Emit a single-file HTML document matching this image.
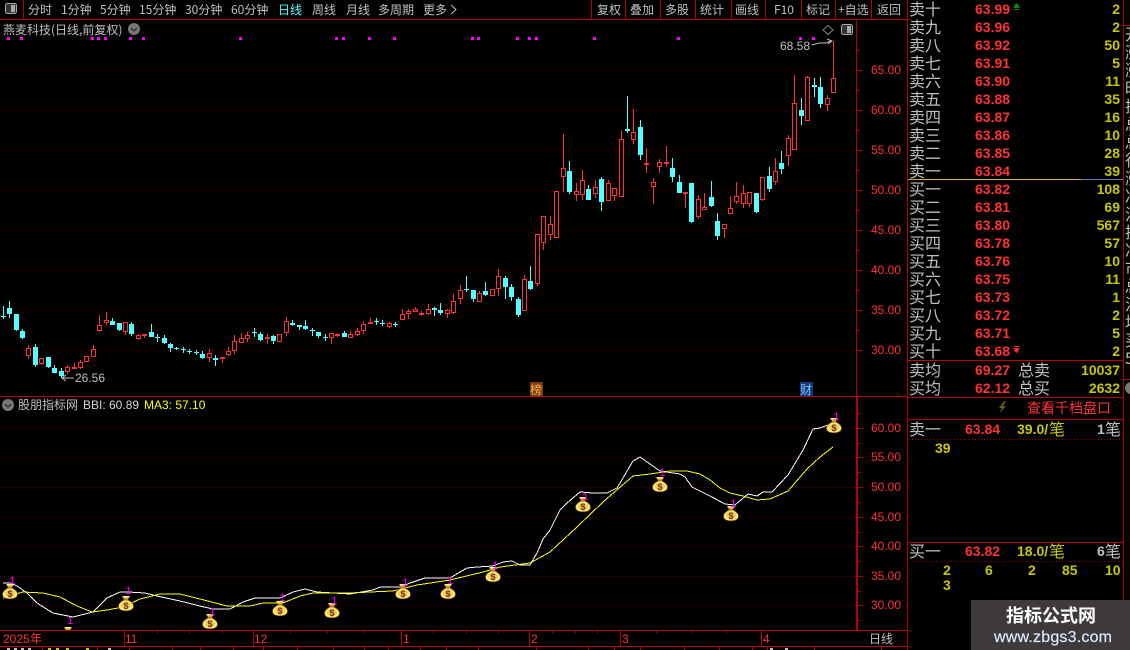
<!DOCTYPE html>
<html><head><meta charset="utf-8"><style>
html,body{margin:0;padding:0;background:#000;width:1130px;height:650px;overflow:hidden}
svg{display:block}
text{font-family:"WenQuanYi Zen Hei","Noto Sans CJK SC","Liberation Sans",sans-serif;font-size:12px;fill:#c0c0c0}
.t{font-size:12px}
.l{font-size:16px}
.n{font-family:"Liberation Sans",sans-serif;font-size:12px}
.b{font-family:"Liberation Sans",sans-serif;font-size:14px;font-weight:bold;fill:#ff3232}
.y{font-family:"Liberation Sans",sans-serif;font-size:14px;font-weight:bold;fill:#c8c800}
.w{font-family:"Liberation Sans",sans-serif;font-size:14px;font-weight:bold;fill:#c0c0c0}
.r{fill:#ff3232}
.m{fill:#f0f;font-family:"Liberation Mono",monospace;font-size:11px}
.d{font-family:"Liberation Sans",sans-serif;font-size:9px;font-weight:bold;fill:#7a2a20}
</style></head><body>
<svg width="1130" height="650" viewBox="0 0 1130 650" xmlns="http://www.w3.org/2000/svg">
<defs>
<radialGradient id="g" cx=".5" cy=".5" r=".5"><stop offset="0" stop-color="#e8b858"/><stop offset=".55" stop-color="#f0cc58"/><stop offset=".8" stop-color="#fff070"/><stop offset="1" stop-color="#fff8a0"/></radialGradient>
<g id="bag"><path d="M-3-7h6l-1.200 3.500h-3.600z" fill="#e09a20"/><path d="M-3.500-8h7v1.500h-7z" fill="#fff2a0"/><path d="M-2-4C-5-2.500-7.500-.5-7.500 2c0 3.200 3 4.800 7.500 4.800S7.500 5.200 7.500 2C7.500-.5 5-2.500 2-4z" fill="url(#g)" stroke="#7a4a10" stroke-width=".7"/></g>
</defs>
<g shape-rendering="crispEdges" fill="none">
<!-- grid -->
<path d="M0 70.500H856M0 110.500H856M0 150.500H856M0 190.500H856M0 230.500H856M0 270.500H856M0 310.500H856M0 350.500H856M0 428.500H856M0 457.500H856M0 487.500H856M0 517.500H856M0 546.500H856M0 576.500H856M0 605.500H856" stroke="#700000" stroke-dasharray="1 3"/>
<!-- frame -->
<path d="M0 19.500H907M0 396.500H907M0 630.500H907M0 646.500H907M23.500 0V19M591.500 0V19M625.500 0V19M660.500 0V19M695.500 0V19M731.500 0V19M765.500 0V19M801.500 0V19M835.500 0V19M871.500 0V19M907.500 0V650M1123.500 0V600M907 360.500H1123M907 397.500H1123M907 419.500H1123M907 542.500H1123M1124 25.500H1130M1124 379.500H1130M856.500 19V397" stroke="#b80000"/>
<path d="M857 397V630" stroke="#b80000" stroke-width="2"/>
<!-- axis ticks -->
<path d="M857 70.500h5M857 110.500h5M857 150.500h5M857 190.500h5M857 230.500h5M857 270.500h5M857 310.500h5M857 350.500h5M857 90.500h3M857 130.500h3M857 170.500h3M857 210.500h3M857 250.500h3M857 290.500h3M857 330.500h3M857 50.500h3M858 428.500h5M858 457.500h5M858 487.500h5M858 517.500h5M858 546.500h5M858 576.500h5M858 605.500h5M858 443.500h3M858 472.500h3M858 502.500h3M858 532.500h3M858 561.500h3M858 591.500h3M858 620.500h3M858 413.500h3" stroke="#b80000"/>
<path d="M124.500 630V646M253.500 630V646M401.500 630V646M529.500 630V646M620.500 630V646M761.500 630V646M157.500 630v3M189.500 630v3M222.500 630v3M290.500 630v3M327.500 630v3M364.500 630v3M433.500 630v3M466.500 630v3M498.500 630v3M552.500 630v3M575.500 630v3M597.500 630v3M656.500 630v3M692.500 630v3M726.500 630v3M42.500 646v4M97.500 646v4M129.500 646v4M172.500 646v4M200.500 646v4M233.500 646v4M263.500 646v4M297.500 646v4M333.500 646v4M364.500 646v4M388.500 646v4M420.500 646v4M446.500 646v4M478.500 646v4M536.500 646v4M588.500 646v4M614.500 646v4M640.500 646v4M684.500 646v4M719.500 646v4M752.500 646v4M767.500 646v4M814.500 646v4M881.500 646v4" stroke="#b80000"/>
<path d="M7 648h3v2h-3zM14 648h3v2h-3zM21 648h3v2h-3zM28 648h3v2h-3zM108 648h3v2h-3zM770 648h3v2h-3zM785 648h3v2h-3z" fill="#c0c0c0"/>
<path d="M48 648h3v2h-3zM56 648h3v2h-3zM66 648h3v2h-3zM86 648h3v2h-3z" fill="#c8c800"/>
<!-- book lines -->
<path d="M908 179.500H1081" stroke="#d8a040"/><path d="M1081 179.500H1123" stroke="#4a80c0"/>
<path d="M909 439.500H1123M909 561.500H1123" stroke="#a00000" stroke-dasharray="1 2"/>
<!-- magenta ticks -->
<path d="M7 37h3v3H7zM20 37h3v3h-3zM91 37h3v3h-3zM97 37h3v3h-3zM104 37h3v3h-3zM129 37h3v3h-3zM142 37h3v3h-3zM239 37h3v3h-3zM335 37h3v3h-3zM342 37h3v3h-3zM368 37h3v3h-3zM393 37h3v3h-3zM471 37h3v3h-3zM477 37h3v3h-3zM516 37h3v3h-3zM528 37h3v3h-3zM535 37h3v3h-3zM593 37h3v3h-3zM677 37h3v3h-3zM799 37h3v3h-3zM812 37h3v3h-3z" fill="#f0f"/>
<!-- cyan wicks -->
<path stroke="#54ffff" d="M3.500 306V319M9.500 301V318M16.500 314V331M22.500 329V339M35.500 344V367M48.500 357V368M54.500 365V373M61.500 368V378M112.500 318V325M119.500 323V331M131.500 322V336M151.500 324V337M157.500 334V342M164.500 335V344M170.500 343V352M176.500 347V350M183.500 347V353M189.500 349V354M196.500 350V355M202.500 351V359M215.500 355V366M254.500 328V337M260.500 332V341M273.500 335V344M292.500 320V326M299.500 325V330M305.500 320V330M312.500 328V336M318.500 332V338M325.500 334V341M344.500 331V337M376.500 318V325M382.500 320V326M395.500 322V327M434.500 307V316M440.500 303V315M466.500 276V292M473.500 290V302M485.500 282V296M505.500 276V299M511.500 284V301M518.500 297V317M530.500 266V290M569.500 161V194M588.500 185V200M601.500 177V211M627.500 96V133M640.500 120V160M672.500 158V182M679.500 175V193M691.500 183V223M711.500 181V207M717.500 213V240M756.500 193V213M769.500 167V192M781.500 151V174M801.500 98V125M814.500 78V97M820.500 77V108"/>
<!-- cyan bodies -->
<path fill="#54ffff" d="M1 316h5v1H1zM7 308h5v6H7zM14 314h5v16h-5zM20 331h5v7h-5zM33 347h5v18h-5zM46 357h5v10h-5zM52 368h5v5h-5zM59 371h5v5h-5zM110 321h5v4h-5zM117 323h5v7h-5zM129 324h5v10h-5zM149 332h5v5h-5zM155 337h5v1h-5zM162 338h5v5h-5zM168 344h5v4h-5zM174 348h5v1h-5zM181 349h5v1h-5zM187 351h5v1h-5zM194 352h5v1h-5zM200 354h5v4h-5zM213 358h5v2h-5zM252 332h5v1h-5zM258 334h5v6h-5zM271 336h5v5h-5zM290 323h5v2h-5zM297 325h5v2h-5zM303 326h5v3h-5zM310 330h5v1h-5zM316 332h5v4h-5zM323 337h5v1h-5zM342 333h5v4h-5zM374 321h5v1h-5zM380 323h5v1h-5zM393 324h5v1h-5zM432 308h5v2h-5zM438 310h5v3h-5zM464 289h5v1h-5zM471 290h5v9h-5zM483 291h5v4h-5zM503 278h5v9h-5zM509 287h5v10h-5zM516 299h5v16h-5zM528 281h5v8h-5zM567 171h5v21h-5zM586 189h5v11h-5zM599 179h5v23h-5zM625 129h5v2h-5zM638 127h5v28h-5zM670 168h5v9h-5zM677 182h5v11h-5zM689 183h5v39h-5zM709 197h5v9h-5zM715 221h5v15h-5zM754 193h5v19h-5zM767 176h5v13h-5zM779 163h5v6h-5zM799 110h5v6h-5zM812 85h5v2h-5zM818 87h5v17h-5z"/>
<!-- red wicks -->
<path stroke="#ff3232" d="M28.500 345V348M28.500 356V359M41.500 364V365M67.500 365V367M67.500 372V374M74.500 363V369M80.500 360V362M80.500 368V369M93.500 345V349M99.500 315V325M99.500 331V332M106.500 312V320M106.500 323V325M125.500 332V335M138.500 334V335M138.500 339V340M144.500 334V338M209.500 349V353M209.500 358V362M222.500 357V363M228.500 347V351M228.500 355V356M234.500 335V341M234.500 351V354M241.500 333V338M247.500 332V335M247.500 339V342M267.500 334V337M267.500 339V344M286.500 317V321M286.500 333V336M331.500 338V344M337.500 333V337M350.500 331V334M357.500 328V331M357.500 335V336M363.500 321V324M363.500 331V334M370.500 318V324M389.500 322V323M389.500 327V328M402.500 309V314M408.500 309V311M408.500 314V319M415.500 307V309M421.500 311V316M428.500 304V309M428.500 314V315M447.500 309V310M447.500 314V318M453.500 294V301M453.500 313V314M460.500 285V290M460.500 299V304M479.500 291V293M498.500 269V276M498.500 289V296M524.500 275V279M537.500 284V286M543.500 243V250M550.500 216V224M550.500 235V240M563.500 134V168M563.500 177V192M576.500 183V191M576.500 195V201M582.500 170V180M582.500 195V200M595.500 180V187M595.500 194V198M608.500 180V183M614.500 196V201M621.500 130V139M633.500 109V132M633.500 140V144M646.500 148V173M653.500 178V182M653.500 187V204M659.500 159V162M659.500 167V173M666.500 146V167M685.500 192V208M698.500 195V199M698.500 217V219M704.500 193V207M724.500 229V238M730.500 196V208M736.500 182V196M736.500 202V204M743.500 185V193M743.500 204V208M749.500 204V207M762.500 200V201M775.500 158V171M775.500 182V185M788.500 135V138M788.500 156V166M794.500 75V103M807.500 76V77M827.500 95V98M827.500 105V111M833.500 41V78"/>
<!-- red bodies -->
<path stroke="#ff3232" d="M26.500 348.500h4v7h-4zM39.500 358.500h4v5h-4zM65.500 367.500h4v4h-4zM72.500 367.500h4v1h-4zM78.500 362.500h4v5h-4zM84.500 356.500h4v5h-4zM91.500 349.500h4v7h-4zM97.500 325.500h4v5h-4zM104.500 320.500h4v2h-4zM123.500 322.500h4v9h-4zM136.500 335.500h4v3h-4zM142.500 334.500h4v1h-4zM207.500 353.500h4v4h-4zM220.500 357.500h4v1h-4zM226.500 351.500h4v3h-4zM232.500 341.500h4v9h-4zM239.500 338.500h4v4h-4zM245.500 335.500h4v3h-4zM265.500 337.500h4v1h-4zM277.500 334.500h4v7h-4zM284.500 321.500h4v11h-4zM329.500 333.500h4v4h-4zM335.500 334.500h4v1h-4zM348.500 334.500h4v3h-4zM355.500 331.500h4v3h-4zM361.500 324.500h4v6h-4zM368.500 322.500h4v1h-4zM387.500 323.500h4v3h-4zM400.500 314.500h4v5h-4zM406.500 311.500h4v2h-4zM413.500 309.500h4v2h-4zM419.500 313.500h4v1h-4zM426.500 309.500h4v4h-4zM445.500 310.500h4v3h-4zM451.500 301.500h4v11h-4zM458.500 290.500h4v8h-4zM477.500 293.500h4v8h-4zM490.500 289.500h4v6h-4zM496.500 276.500h4v12h-4zM522.500 279.500h4v31h-4zM535.500 234.500h4v49h-4zM541.500 216.500h4v26h-4zM548.500 224.500h4v10h-4zM554.500 191.500h4v46h-4zM561.500 168.500h4v8h-4zM574.500 191.500h4v3h-4zM580.500 180.500h4v14h-4zM593.500 187.500h4v6h-4zM606.500 183.500h4v17h-4zM612.500 188.500h4v7h-4zM619.500 139.500h4v57h-4zM631.500 132.500h4v7h-4zM644.500 163.500h4v1h-4zM651.500 182.500h4v4h-4zM657.500 162.500h4v4h-4zM664.500 162.500h4v1h-4zM683.500 192.500h4v1h-4zM696.500 199.500h4v17h-4zM702.500 207.500h4v2h-4zM722.500 224.500h4v4h-4zM728.500 208.500h4v5h-4zM734.500 196.500h4v5h-4zM741.500 193.500h4v10h-4zM747.500 192.500h4v11h-4zM760.500 177.500h4v22h-4zM773.500 171.500h4v10h-4zM786.500 138.500h4v17h-4zM792.500 103.500h4v46h-4zM805.500 77.500h4v43h-4zM825.500 98.500h4v6h-4zM831.500 78.500h4v14h-4z"/>
<!-- labels bg -->
<rect x="530" y="382" width="13" height="14" fill="#7a3c10"/>
<rect x="800" y="382" width="13" height="14" fill="#103c7a"/>
</g>
<!-- indicator lines -->
<polyline fill="none" shape-rendering="crispEdges" stroke="#fff" stroke-width="1" points="3,583 11,583 17,586 27,593 37,603 53,613 73,617 93,612 107,598 120,592 128,592 145,593 157,596 180,601 200,606 213,609 230,609 243,602 255,598 280,598 293,592 305,589 317,592 350,594 373,590 380,587 400,587 410,583 425,578 450,578 467,568 477,567 493,566 503,562 512,561 520,565 530,565 537,553 543,539 550,530 560,510 567,503 580,492 593,493 607,493 617,488 623,478 633,461 640,457 650,464 660,471 680,474 685,477 692,487 710,496 725,504 735,505 748,494 757,496 763,492 772,492 788,475 797,460 803,450 813,429 820,428 833,423"/>
<polyline fill="none" shape-rendering="crispEdges" stroke="#ffff00" stroke-width="1" points="3,598 23,592 43,593 60,597 77,606 92,612 107,610 123,607 140,599 160,594 180,594 200,599 227,606 250,606 263,603 283,603 300,596 313,593 350,593 370,592 393,591 417,585 450,580 483,572 500,567 530,563 550,552 577,527 603,502 633,476 650,474 670,471 687,471 700,474 710,480 720,488 730,493 743,496 757,500 770,499 788,491 807,469 820,457 833,447"/>
<!-- bags -->
<svg x="0" y="397" width="856" height="233">
<use href="#bag" x="10" y="195"/><use href="#bag" x="68" y="238"/><use href="#bag" x="126" y="207"/><use href="#bag" x="210" y="225"/><use href="#bag" x="280" y="212"/><use href="#bag" x="332" y="214"/><use href="#bag" x="403" y="195"/><use href="#bag" x="448" y="195"/><use href="#bag" x="493" y="178"/><use href="#bag" x="583" y="108"/><use href="#bag" x="660" y="88"/><use href="#bag" x="731" y="117"/><use href="#bag" x="834" y="29"/>
<g text-anchor="middle"><text class="d" x="10" y="200">$</text><text class="d" x="126" y="212">$</text><text class="d" x="210" y="230">$</text><text class="d" x="280" y="217">$</text><text class="d" x="332" y="219">$</text><text class="d" x="403" y="200">$</text><text class="d" x="448" y="200">$</text><text class="d" x="493" y="183">$</text><text class="d" x="583" y="113">$</text><text class="d" x="660" y="93">$</text><text class="d" x="731" y="122">$</text><text class="d" x="834" y="34">$</text></g>
<text class="m" x="9" y="187">1</text><text class="m" x="67" y="227">1</text><text class="m" x="125" y="197">1</text><text class="m" x="209" y="218">1</text><text class="m" x="279" y="204">1</text><text class="m" x="331" y="207">1</text><text class="m" x="402" y="189">1</text><text class="m" x="447" y="187">1</text><text class="m" x="492" y="172">1</text><text class="m" x="582" y="103">1</text><text class="m" x="659" y="79">1</text><text class="m" x="730" y="110">1</text><text class="m" x="833" y="23">1</text>
</svg>
<!-- toolbar -->
<rect x="5.500" y="3.500" width="11" height="10" rx="2" fill="#333" stroke="#aaa"/><rect x="11" y="5" width="4" height="7" fill="#aaa"/>
<g class="t">
<text x="28" y="14">分时</text><text x="61" y="14">1分钟</text><text x="100" y="14">5分钟</text><text x="139" y="14">15分钟</text><text x="185" y="14">30分钟</text><text x="231" y="14">60分钟</text><text x="278" y="14" style="fill:#54ffff">日线</text><text x="312" y="14">周线</text><text x="346" y="14">月线</text><text x="378" y="14">多周期</text><text x="423" y="14">更多</text>
<text x="597" y="14">复权</text><text x="630" y="14">叠加</text><text x="665" y="14">多股</text><text x="700" y="14">统计</text><text x="735" y="14">画线</text><text x="774" y="14">F10</text><text x="806" y="14">标记</text><text x="838" y="14">+自选</text><text x="877" y="14">返回</text>
</g>
<path d="M451 5l5 4.500-5 4.500" fill="none" stroke="#c0c0c0"/>
<!-- main title -->
<text x="3" y="34">燕麦科技(日线,前复权)</text>
<circle cx="134" cy="29" r="6" fill="#777"/><path d="M131 28l3 3 3-3" fill="none" stroke="#222"/>
<path d="M828 25.500l5 4.500-5 4.500-5-4.500z" fill="none" stroke="#888"/>
<rect x="841.500" y="24.500" width="11" height="10" rx="2" fill="#333" stroke="#aaa"/><rect x="847" y="26" width="4" height="7" fill="#aaa"/>
<text class="n" x="780" y="50">68.58</text>
<path d="M812 45l7-2h7l5-2M827 39l5 2-4 3" fill="none" stroke="#c0c0c0"/>
<text class="n" x="75" y="382">26.56</text>
<path d="M62 378h12M66 375l-4 3 4 3" fill="none" stroke="#c0c0c0"/>
<text x="530" y="394" style="fill:#ffb040">榜</text><text x="800" y="394" style="fill:#80c0ff">财</text>
<!-- price axis -->
<g>
<text class="n r" x="871" y="74">65.00</text><text class="n r" x="871" y="114">60.00</text><text class="n r" x="871" y="154">55.00</text><text class="n r" x="871" y="194">50.00</text><text class="n r" x="871" y="234">45.00</text><text class="n r" x="871" y="274">40.00</text><text class="n r" x="871" y="314">35.00</text><text class="n r" x="871" y="354">30.00</text>
<text class="n r" x="871" y="432">60.00</text><text class="n r" x="871" y="461">55.00</text><text class="n r" x="871" y="491">50.00</text><text class="n r" x="871" y="521">45.00</text><text class="n r" x="871" y="550">40.00</text><text class="n r" x="871" y="580">35.00</text><text class="n r" x="871" y="609">30.00</text>
</g>
<!-- lower title -->
<circle cx="8" cy="405" r="6" fill="#777"/><path d="M5 404l3 3 3-3" fill="none" stroke="#222"/>
<text x="18" y="409">股朋指标网</text><text class="n" x="83" y="409" style="fill:#d8d8d8">BBI: 60.89</text><text class="n" x="144" y="409" style="fill:#ffff00">MA3: 57.10</text>
<!-- time axis -->
<text class="r n" x="3" y="643">2025</text><text class="r" x="30" y="643">年</text>
<text class="r n" x="125" y="643">11</text><text class="r n" x="254" y="643">12</text><text class="r n" x="403" y="643">1</text><text class="r n" x="531" y="643">2</text><text class="r n" x="622" y="643">3</text><text class="r n" x="763" y="643">4</text>
<text x="869" y="643">日线</text>
<!-- order book -->
<g class="l">
<text class="l" x="909" y="15">卖十</text><text class="l" x="909" y="33">卖九</text><text class="l" x="909" y="51">卖八</text><text class="l" x="909" y="69">卖七</text><text class="l" x="909" y="87">卖六</text><text class="l" x="909" y="105">卖五</text><text class="l" x="909" y="123">卖四</text><text class="l" x="909" y="141">卖三</text><text class="l" x="909" y="159">卖二</text><text class="l" x="909" y="177">卖一</text>
<text class="l" x="909" y="195">买一</text><text class="l" x="909" y="213">买二</text><text class="l" x="909" y="231">买三</text><text class="l" x="909" y="249">买四</text><text class="l" x="909" y="267">买五</text><text class="l" x="909" y="285">买六</text><text class="l" x="909" y="303">买七</text><text class="l" x="909" y="321">买八</text><text class="l" x="909" y="339">买九</text><text class="l" x="909" y="357">买十</text>
<text class="l" x="909" y="376">卖均</text><text class="l" x="909" y="394">买均</text><text class="l" x="1018" y="376">总卖</text><text class="l" x="1018" y="394">总买</text>
<text class="l" x="909" y="435">卖一</text><text class="l" x="909" y="557">买一</text>
</g>
<g>
<text class="b" x="975" y="14">63.99</text><text class="b" x="975" y="32">63.96</text><text class="b" x="975" y="50">63.92</text><text class="b" x="975" y="68">63.91</text><text class="b" x="975" y="86">63.90</text><text class="b" x="975" y="104">63.88</text><text class="b" x="975" y="122">63.87</text><text class="b" x="975" y="140">63.86</text><text class="b" x="975" y="158">63.85</text><text class="b" x="975" y="176">63.84</text>
<text class="b" x="975" y="194">63.82</text><text class="b" x="975" y="212">63.81</text><text class="b" x="975" y="230">63.80</text><text class="b" x="975" y="248">63.78</text><text class="b" x="975" y="266">63.76</text><text class="b" x="975" y="284">63.75</text><text class="b" x="975" y="302">63.73</text><text class="b" x="975" y="320">63.72</text><text class="b" x="975" y="338">63.71</text><text class="b" x="975" y="356">63.68</text>
<text class="b" x="975" y="375">69.27</text><text class="b" x="975" y="393">62.12</text><text class="b" x="965" y="434">63.84</text><text class="b" x="965" y="556">63.82</text>
</g>
<g text-anchor="end">
<text class="y" x="1120" y="14">2</text><text class="y" x="1120" y="32">2</text><text class="y" x="1120" y="50">50</text><text class="y" x="1120" y="68">5</text><text class="y" x="1120" y="86">11</text><text class="y" x="1120" y="104">35</text><text class="y" x="1120" y="122">16</text><text class="y" x="1120" y="140">10</text><text class="y" x="1120" y="158">28</text><text class="y" x="1120" y="176">39</text>
<text class="y" x="1120" y="194">108</text><text class="y" x="1120" y="212">69</text><text class="y" x="1120" y="230">567</text><text class="y" x="1120" y="248">57</text><text class="y" x="1120" y="266">10</text><text class="y" x="1120" y="284">11</text><text class="y" x="1120" y="302">1</text><text class="y" x="1120" y="320">2</text><text class="y" x="1120" y="338">5</text><text class="y" x="1120" y="356">2</text>
<text class="y" x="1120" y="375">10037</text><text class="y" x="1120" y="393">2632</text>
</g>
<path d="M1016.500 3l3 3h-1.500l2 2h-7l2-2h-1.500zM1014 9h5v1h-5z" fill="#0a8a0a"/>
<path d="M1013 348h7l-2 2h1.500l-3 3-3-3h1.500zM1014 346h5v1h-5z" fill="#ff3232"/>
<path d="M1004 401l-5 7h3l-3 6 7-8h-3l3-5z" fill="#6a5a20"/>
<text x="1027" y="413" style="font-size:14px;fill:#ff3232">查看千档盘口</text>
<text class="y" x="1017" y="434">39.0/</text><text x="1049" y="435" style="font-size:16px;fill:#c8c800">笔</text>
<text class="w" x="1097" y="434">1</text><text x="1105" y="435" style="font-size:16px">笔</text>
<text class="y" x="935" y="453">39</text>
<text class="y" x="1017" y="556">18.0/</text><text x="1049" y="557" style="font-size:16px;fill:#c8c800">笔</text>
<text class="w" x="1097" y="556">6</text><text x="1105" y="557" style="font-size:16px">笔</text>
<text class="y" x="943" y="575">2</text><text class="y" x="985" y="575">6</text><text class="y" x="1028" y="575">2</text><text class="y" x="1062" y="575">85</text><text class="y" x="1105" y="575">10</text><text class="y" x="943" y="590">3</text>
<!-- cut-off right column -->
<svg x="1124" y="26" width="6" height="353">
<text class="l" x="1" y="14">开</text><text class="l" x="1" y="32">涨</text><text class="l" x="1" y="50">涨</text><text class="l" x="1" y="68">昨</text><text class="l" x="1" y="86">换</text><text class="l" x="1" y="104">总</text><text class="l" x="1" y="122">总</text><text class="l" x="1" y="140">行</text><text class="l" x="1" y="158">涨</text><text class="l" x="1" y="176">净</text><text class="l" x="1" y="194">流</text><text class="l" x="1" y="212">换</text><text class="l" x="1" y="230">净</text><text class="l" x="1" y="248">市</text><text class="l" x="1" y="266">总</text><text class="l" x="1" y="284">流</text><text class="l" x="1" y="302">均</text><text class="l" x="1" y="320">买</text><text class="l" x="1" y="338">5</text>
</svg>
<circle cx="1131" cy="388" r="6" fill="#777"/>
<!-- watermark -->
<rect x="971" y="600" width="159" height="50" fill="#3f3a3a"/>
<text x="1006" y="622" style="font-family:'Noto Sans CJK SC',sans-serif;font-size:18px;font-weight:bold;fill:#fff">指标公式网</text>
<text x="994" y="642" textLength="118" style="font-family:'Liberation Sans',sans-serif;font-size:16px;fill:#d8e8ff;stroke:#d8e8ff;stroke-width:.2">www.zbgs3.com</text>
</svg>
</body></html>
